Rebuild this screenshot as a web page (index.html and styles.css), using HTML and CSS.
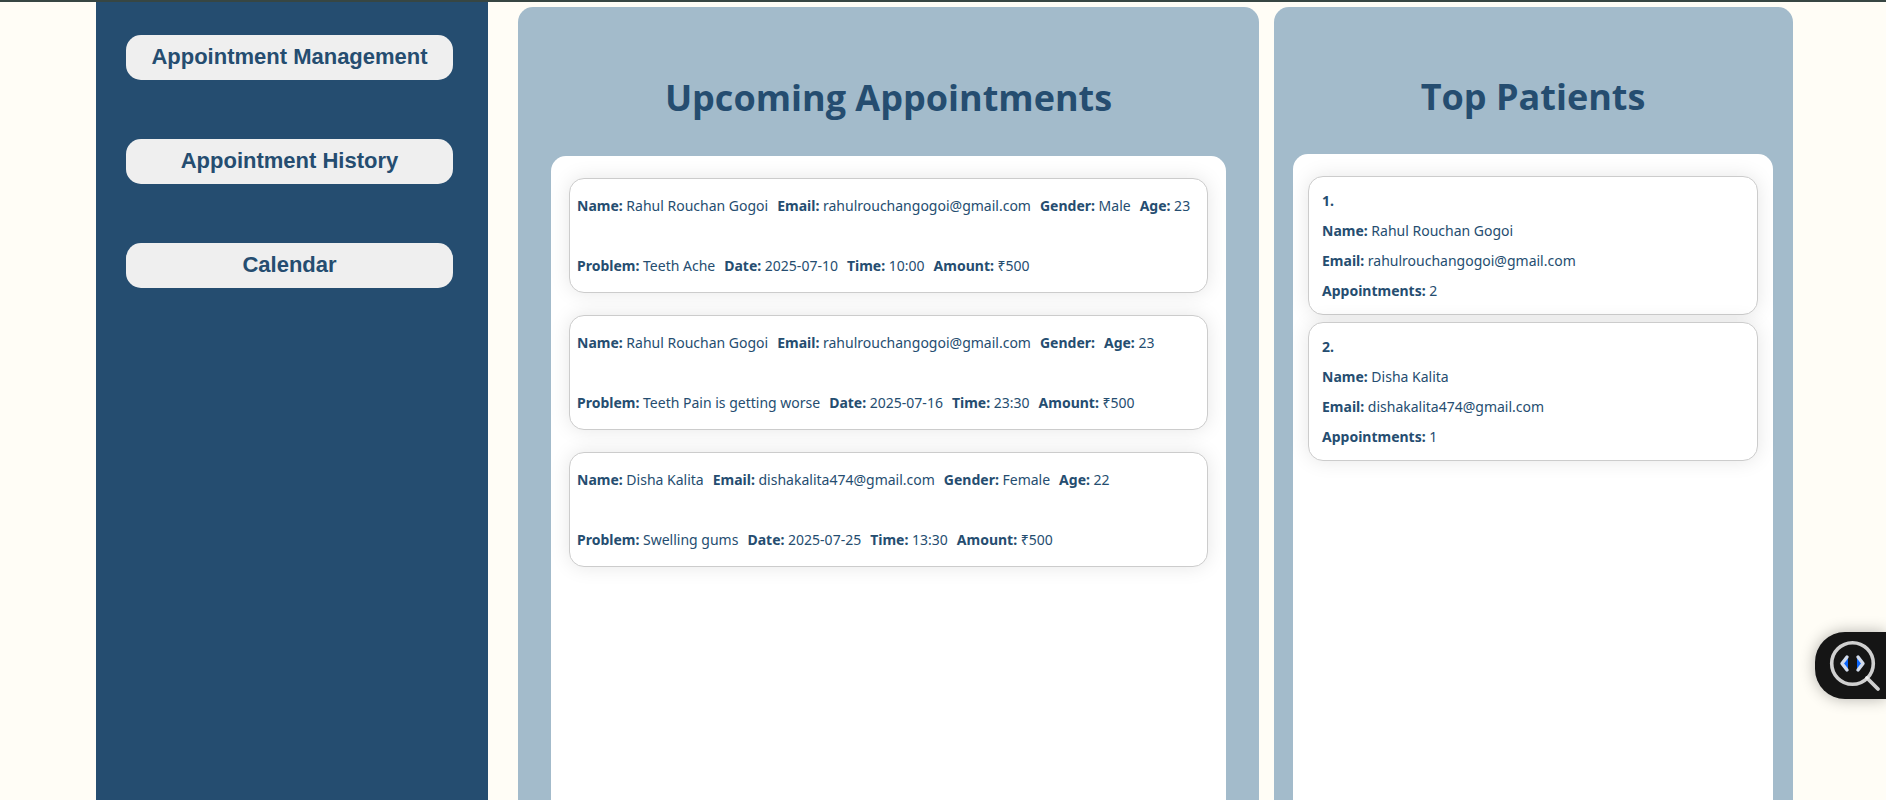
FILE: index.html
```html
<!DOCTYPE html>
<html lang="en">
<head>
<meta charset="utf-8">
<meta name="viewport" content="width=device-width, initial-scale=1">
<title>Clinic Dashboard</title>
<link rel="stylesheet" href="styles.css">
</head>
<body>
<div class="page">
  <nav class="sidebar" aria-label="Main">
    <button class="nav-button" type="button">Appointment Management</button>
    <button class="nav-button" type="button">Appointment History</button>
    <button class="nav-button" type="button">Calendar</button>
  </nav>
  <main class="panels">
    <section class="panel panel-appointments">
      <h1 class="panel-title">Upcoming Appointments</h1>
      <div class="list list-appointments">
        <article class="card appointment">
          <div class="row">
            <span><b>Name:</b> Rahul Rouchan Gogoi</span>
            <span><b>Email:</b> rahulrouchangogoi@gmail.com</span>
            <span><b>Gender:</b> Male</span>
            <span><b>Age:</b> 23</span>
          </div>
          <div class="row">
            <span><b>Problem:</b> Teeth Ache</span>
            <span><b>Date:</b> 2025-07-10</span>
            <span><b>Time:</b> 10:00</span>
            <span><b>Amount:</b> ₹500</span>
          </div>
        </article>
        <article class="card appointment">
          <div class="row">
            <span><b>Name:</b> Rahul Rouchan Gogoi</span>
            <span><b>Email:</b> rahulrouchangogoi@gmail.com</span>
            <span><b>Gender:</b></span>
            <span><b>Age:</b> 23</span>
          </div>
          <div class="row">
            <span><b>Problem:</b> Teeth Pain is getting worse</span>
            <span><b>Date:</b> 2025-07-16</span>
            <span><b>Time:</b> 23:30</span>
            <span><b>Amount:</b> ₹500</span>
          </div>
        </article>
        <article class="card appointment">
          <div class="row">
            <span><b>Name:</b> Disha Kalita</span>
            <span><b>Email:</b> dishakalita474@gmail.com</span>
            <span><b>Gender:</b> Female</span>
            <span><b>Age:</b> 22</span>
          </div>
          <div class="row">
            <span><b>Problem:</b> Swelling gums</span>
            <span><b>Date:</b> 2025-07-25</span>
            <span><b>Time:</b> 13:30</span>
            <span><b>Amount:</b> ₹500</span>
          </div>
        </article>
      </div>
    </section>
    <section class="panel panel-patients">
      <h1 class="panel-title">Top Patients</h1>
      <div class="list list-patients">
        <article class="card patient">
          <div><b>1.</b></div>
          <div><b>Name:</b> Rahul Rouchan Gogoi</div>
          <div><b>Email:</b> rahulrouchangogoi@gmail.com</div>
          <div><b>Appointments:</b> 2</div>
        </article>
        <article class="card patient">
          <div><b>2.</b></div>
          <div><b>Name:</b> Disha Kalita</div>
          <div><b>Email:</b> dishakalita474@gmail.com</div>
          <div><b>Appointments:</b> 1</div>
        </article>
      </div>
    </section>
  </main>
</div>
<button class="inspect" type="button" aria-label="Inspect code">
  <svg width="71" height="67" viewBox="0 0 71 67" fill="none" stroke-linecap="round" stroke-linejoin="round">
    <path d="M33 26v11l-5-5.500z M42 26v11l5-5.500z" fill="#0a66ff"/>
    <circle cx="37.500" cy="31.500" r="20.800" stroke="#d0d0d0" stroke-width="3.600"/>
    <path d="M52 46L63 57" stroke="#d0d0d0" stroke-width="3.800"/>
    <path d="M32 25L27 31.500L32 38M43 25L48 31.500L43 38" stroke="#d3dcec" stroke-width="3.400"/>
    <circle cx="52" cy="46" r="1.800" fill="#f4f4f4"/>
  </svg>
</button>
</body>
</html>
```
FILE: styles.css
```css
* {
  box-sizing: border-box;
}

body {
  margin: 0;
  background: #fffdf6;
  color: #254d70;
  font-family: "Segoe UI", "Noto Sans", "Open Sans", sans-serif;
  font-size: 14px;
  line-height: 30px;
}

.page {
  display: grid;
  grid-template-columns: 392fr 1275fr;
  column-gap: 30px;
  min-height: 100vh;
  padding: 0 93px 0 96px;
  border-top: 2px solid #374643;
}

.sidebar {
  display: flex;
  flex-direction: column;
  gap: 59px;
  padding: 33px 35px 33px 30px;
  background: #254d70;
}

.nav-button {
  height: 45px;
  padding: 0 8px 2px;
  border: 0;
  border-radius: 15px;
  background: #efefef;
  color: #254d70;
  font: bold 22px "Liberation Sans", Arial, sans-serif;
  cursor: pointer;
}

.panels {
  display: grid;
  grid-template-columns: 741fr 519fr;
  column-gap: 15px;
  padding-top: 5px;
}

.panel {
  display: flex;
  flex-direction: column;
  border-radius: 15px 15px 0 0;
  background: #a3bbcb;
}

.panel-appointments {
  padding: 64px 33px 0;
}

.panel-patients {
  padding: 63px 20px 0 19px;
}

.panel-title {
  margin: 0 0 32px;
  font-family: "Segoe UI", "Open Sans", "Noto Sans", sans-serif;
  font-size: 36px;
  font-weight: 700;
  line-height: 53px;
  text-align: center;
}

.panel-patients .panel-title {
  margin-bottom: 31px;
}

.list {
  display: flex;
  flex: 1;
  flex-direction: column;
  border-radius: 15px 15px 0 0;
  background: #fff;
}

.list-appointments {
  gap: 22px;
  padding: 22px 18px;
}

.list-patients {
  gap: 7px;
  padding: 22px 15px;
}

.card {
  border: 1px solid #ccc;
  border-radius: 15px;
  background: #fff;
  box-shadow: 0 0 20px rgba(0, 0, 0, 0.1);
}

.appointment {
  display: flex;
  flex-direction: column;
  gap: 30px;
  padding: 12px 7px 11px;
}

.row {
  display: flex;
  flex-wrap: wrap;
  column-gap: 9px;
}

.patient {
  padding: 9px 13px 8px;
}

.inspect {
  position: fixed;
  right: 0;
  top: 79%;
  padding: 0;
  border: 0;
  border-radius: 30px 0 0 30px;
  background: #151515;
  box-shadow: 0 0 15px rgba(0, 0, 0, 0.3);
  cursor: pointer;
}

.inspect svg {
  display: block;
}
```
